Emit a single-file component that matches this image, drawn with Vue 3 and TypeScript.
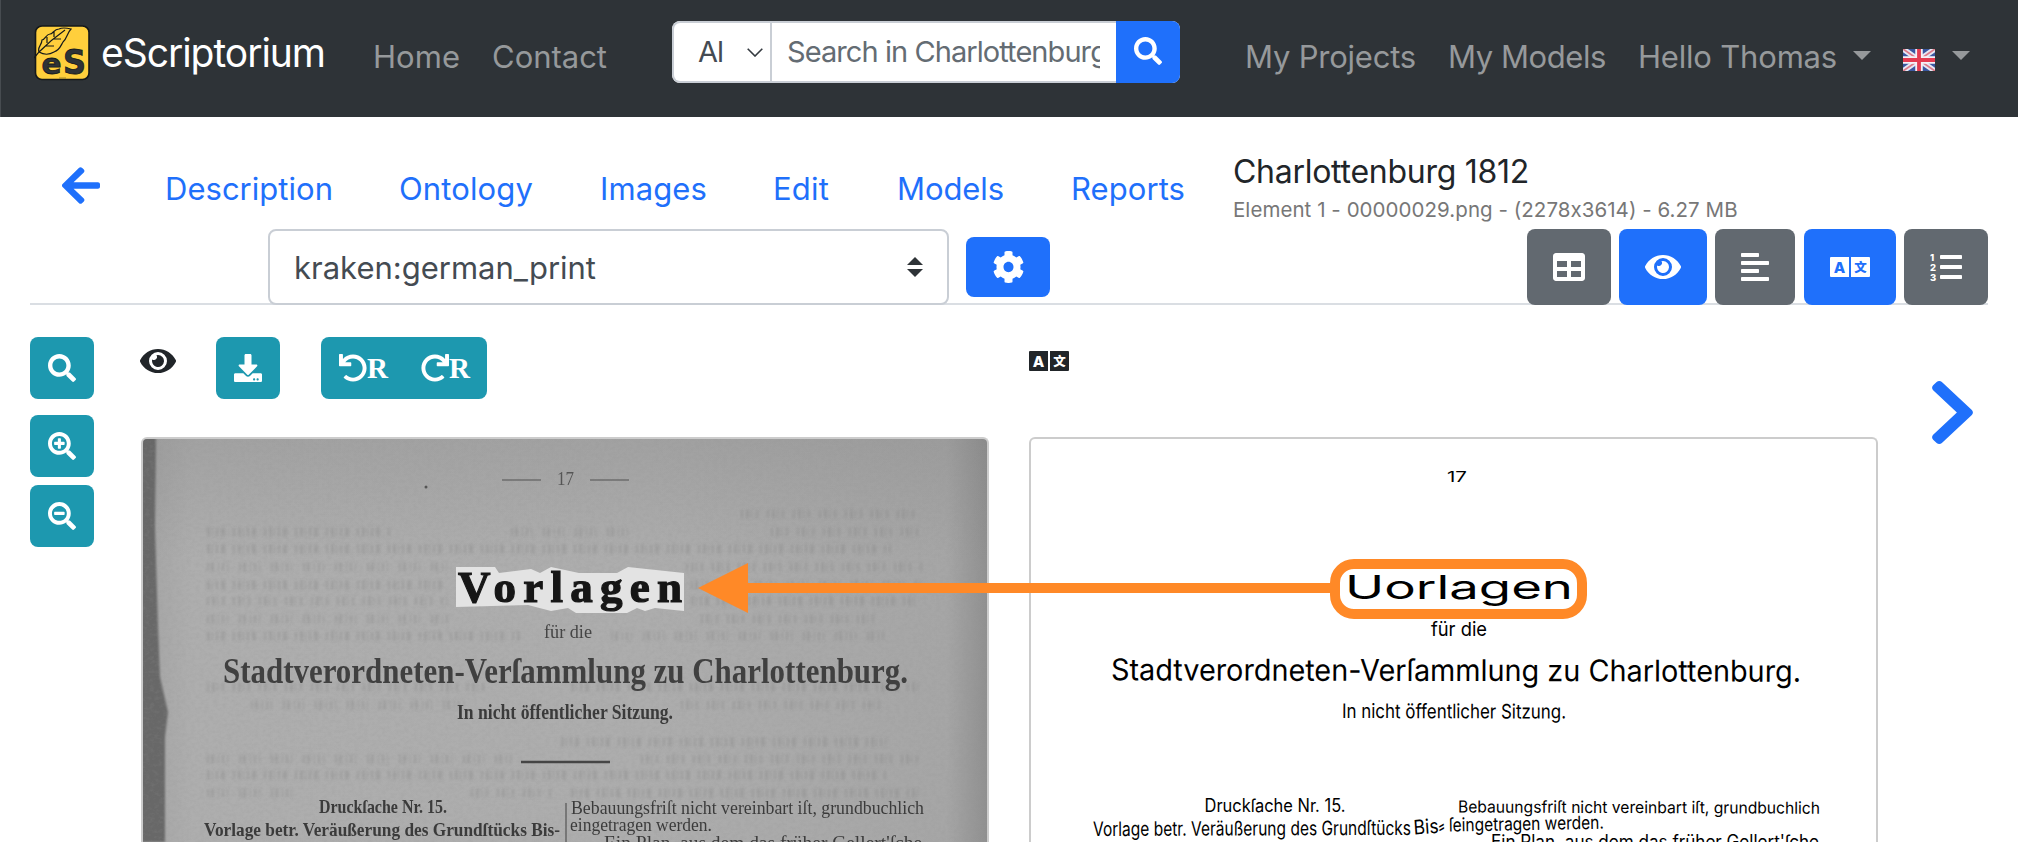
<script setup lang="ts">
import { h, type FunctionalComponent, type ObjectDirective } from 'vue'

/* Spreads a label over a fixed width by adjusting its letter spacing. */
const vFit: ObjectDirective<HTMLElement, number> = {
  mounted(el, binding) {
    const natural = el.getBoundingClientRect().width
    const count = (el.textContent ?? '').trim().length
    el.style.letterSpacing = `${(binding.value - natural) / count}px`
  },
}

const glyphs: Record<string, [string, string]> = {
  search: ['0 0 512 512', 'M505 442.7L405.3 343c-4.5-4.5-10.6-7-17-7H372c27.6-35.3 44-79.7 44-128C416 93.1 322.9 0 208 0S0 93.1 0 208s93.1 208 208 208c48.3 0 92.7-16.4 128-44v16.3c0 6.4 2.5 12.5 7 17l99.7 99.7c9.4 9.4 24.6 9.4 33.9 0l28.3-28.3c9.4-9.4 9.4-24.6.1-34zM208 336c-70.7 0-128-57.2-128-128 0-70.7 57.2-128 128-128 70.7 0 128 57.2 128 128 0 70.7-57.2 128-128 128z'],
  plus: ['0 0 512 512', 'M304 192v32c0 6.6-5.4 12-12 12h-56v56c0 6.6-5.4 12-12 12h-32c-6.6 0-12-5.4-12-12v-56h-56c-6.6 0-12-5.4-12-12v-32c0-6.6 5.4-12 12-12h56v-56c0-6.6 5.4-12 12-12h32c6.6 0 12 5.4 12 12v56h56c6.6 0 12 5.4 12 12zm201 284.7L476.7 505c-9.4 9.4-24.6 9.4-33.9 0L343 405.3c-4.5-4.5-7-10.6-7-17V372c-35.3 27.6-79.7 44-128 44C93.1 416 0 322.9 0 208S93.1 0 208 0s208 93.1 208 208c0 48.3-16.4 92.7-44 128h16.3c6.4 0 12.5 2.5 17 7l99.7 99.7c9.3 9.4 9.3 24.6 0 34zM344 208c0-75.2-60.8-136-136-136S72 132.8 72 208s60.8 136 136 136 136-60.8 136-136z'],
  minus: ['0 0 512 512', 'M304 192v32c0 6.6-5.4 12-12 12H124c-6.6 0-12-5.4-12-12v-32c0-6.6 5.4-12 12-12h168c6.6 0 12 5.4 12 12zm201 284.7L476.7 505c-9.4 9.4-24.6 9.4-33.9 0L343 405.3c-4.5-4.5-7-10.6-7-17V372c-35.3 27.6-79.7 44-128 44C93.1 416 0 322.9 0 208S93.1 0 208 0s208 93.1 208 208c0 48.3-16.4 92.7-44 128h16.3c6.4 0 12.5 2.5 17 7l99.7 99.7c9.3 9.4 9.3 24.6 0 34zM344 208c0-75.2-60.8-136-136-136S72 132.8 72 208s60.8 136 136 136 136-60.8 136-136z'],
  eye: ['0 64 576 384', 'M572.52 241.4C518.29 135.59 410.93 64 288 64S57.68 135.64 3.48 241.41a32.35 32.35 0 0 0 0 29.19C57.71 376.41 165.07 448 288 448s230.32-71.64 284.52-177.41a32.35 32.35 0 0 0 0-29.19zM288 400a144 144 0 1 1 144-144 143.93 143.93 0 0 1-144 144zm0-240a95.31 95.31 0 0 0-25.31 3.79 47.85 47.85 0 0 1-66.9 66.9A95.78 95.78 0 1 0 288 160z'],
  back: ['0 36 448 440', 'M257.5 445.1l-22.2 22.2c-9.4 9.4-24.6 9.4-33.9 0L7 273c-9.4-9.4-9.4-24.6 0-33.9L201.4 44.7c9.4-9.4 24.6-9.4 33.9 0l22.2 22.2c9.5 9.5 9.3 25-.4 34.3L136.6 216H424c13.3 0 24 10.7 24 24v32c0 13.3-10.7 24-24 24H136.6l120.5 114.8c9.8 9.3 10 24.8.4 34.3z'],
  next: ['27 37 266 438', 'M285.476 272.971L91.132 467.314c-9.373 9.373-24.569 9.373-33.941 0l-22.667-22.667c-9.357-9.357-9.375-24.522-.04-33.901L188.505 256 34.484 101.255c-9.335-9.379-9.317-24.544.04-33.901l22.667-22.667c9.373-9.373 24.569-9.373 33.941 0L285.475 239.03c9.373 9.372 9.373 24.568.001 33.941z'],
  cog: ['8 8 496 496', 'M487.4 315.7l-42.6-24.6c4.3-23.2 4.3-47 0-70.2l42.6-24.6c4.9-2.8 7.1-8.6 5.5-14-11.1-35.6-30-67.8-54.7-94.6-3.8-4.1-10-5.1-14.8-2.3L380.8 110c-17.9-15.4-38.5-27.3-60.8-35.1V25.8c0-5.6-3.9-10.5-9.4-11.7-36.7-8.2-74.3-7.8-109.2 0-5.5 1.2-9.4 6.1-9.4 11.7V75c-22.2 7.9-42.8 19.8-60.8 35.1L88.7 85.5c-4.9-2.8-11-1.9-14.8 2.3-24.7 26.7-43.6 58.9-54.7 94.6-1.7 5.4.6 11.2 5.5 14L67.3 221c-4.3 23.2-4.3 47 0 70.2l-42.6 24.6c-4.9 2.8-7.1 8.6-5.5 14 11.1 35.6 30 67.8 54.7 94.6 3.8 4.1 10 5.1 14.8 2.3l42.6-24.6c17.9 15.4 38.5 27.3 60.8 35.1v49.2c0 5.6 3.9 10.5 9.4 11.7 36.7 8.2 74.3 7.8 109.2 0 5.5-1.2 9.4-6.1 9.4-11.7v-49.2c22.2-7.9 42.8-19.8 60.8-35.1l42.6 24.6c4.9 2.8 11 1.9 14.8-2.3 24.7-26.7 43.6-58.9 54.7-94.6 1.5-5.5-.7-11.3-5.6-14.1zM256 336c-44.1 0-80-35.9-80-80s35.9-80 80-80 80 35.9 80 80-35.9 80-80 80z'],
  table: ['0 32 512 448', 'M464 32H48C21.49 32 0 53.49 0 80v352c0 26.51 21.49 48 48 48h416c26.51 0 48-21.49 48-48V80c0-26.51-21.49-48-48-48zM224 416H64v-96h160v96zm0-160H64v-96h160v96zm224 160H288v-96h160v96zm0-160H288v-96h160v96z'],
  align: ['0 32 448 448', 'M13 32h262q13 0 13 13v38q0 13-13 13H13Q0 96 0 83V45q0-13 13-13zM13 160h422q13 0 13 13v38q0 13-13 13H13q-13 0-13-13v-38q0-13 13-13zM13 288h262q13 0 13 13v38q0 13-13 13H13q-13 0-13-13v-38q0-13 13-13zM13 416h422q13 0 13 13v38q0 13-13 13H13q-13 0-13-13v-38q0-13 13-13z'],
  undo: ['0 0 512 512', 'M212.333 224.333H12c-6.627 0-12-5.373-12-12V12C0 5.373 5.373 0 12 0h48c6.627 0 12 5.373 12 12v78.112C117.773 39.279 184.26 7.47 258.175 8.007c136.906.994 246.448 111.623 246.157 248.532C504.041 393.258 393.12 504 256.333 504c-64.089 0-122.496-24.313-166.51-64.215-5.099-4.622-5.334-12.554-.467-17.42l33.967-33.967c4.474-4.474 11.662-4.717 16.401-.525C170.76 415.336 211.58 432 256.333 432c97.268 0 176-78.716 176-176 0-97.267-78.716-176-176-176-58.496 0-110.28 28.476-142.274 72.333h98.274c6.627 0 12 5.373 12 12v48c0 6.627-5.373 12-12 12z'],
  download: ['0 0 512 512', 'M216 0h80c13.3 0 24 10.7 24 24v168h87.7c17.8 0 26.7 21.5 14.1 34.1L269.7 378.3c-7.5 7.5-19.8 7.5-27.3 0L90.1 226.1c-12.6-12.6-3.7-34.1 14.1-34.1H192V24c0-13.3 10.7-24 24-24zm296 376v112c0 13.3-10.7 24-24 24H24c-13.3 0-24-10.7-24-24V376c0-13.3 10.7-24 24-24h146.7l49 49c20.1 20.1 52.5 20.1 72.6 0l49-49H488c13.3 0 24 10.7 24 24zm-124 88c0-11-9-20-20-20s-20 9-20 20 9 20 20 20 20-9 20-20zm64 0c0-11-9-20-20-20s-20 9-20 20 9 20 20 20 20-9 20-20z'],
}

const Icon: FunctionalComponent<{ name: string; w: number; h: number }> = (p) =>
  h('svg', { viewBox: glyphs[p.name][0], width: p.w, height: p.h, fill: 'currentColor', preserveAspectRatio: 'none' }, [
    h('path', { d: glyphs[p.name][1] }),
  ])
Icon.props = ['name', 'w', 'h']

const Lang: FunctionalComponent<{ knock: string }> = (p) =>
  h('svg', { viewBox: '0 0 40 20', width: 40, height: 20, fill: 'currentColor' }, [
    h('path', { d: 'M1 0H19V20H1Q0 20 0 19V1Q0 0 1 0ZM21 0H39Q40 0 40 1V19Q40 20 39 20H21Z' }),
    h('text', { x: 9.5, y: 15.5, 'text-anchor': 'middle', 'font-size': 15, 'font-weight': 800, 'font-family': 'Inter, sans-serif', fill: p.knock }, 'A'),
    h('text', { x: 30.5, y: 14.6, 'text-anchor': 'middle', 'font-size': 12.5, 'font-weight': 900, 'font-family': '"Noto Sans CJK SC", sans-serif', fill: p.knock }, '文'),
  ])
Lang.props = ['knock']

interface Tab { label: string; gap: number; width: number }
const tabs: Tab[] = [
  { label: 'Description', gap: 65, width: 168 },
  { label: 'Ontology', gap: 66, width: 134 },
  { label: 'Images', gap: 67, width: 107 },
  { label: 'Edit', gap: 66, width: 56 },
  { label: 'Models', gap: 68, width: 107 },
  { label: 'Reports', gap: 67, width: 114 },
]

interface Line { t: string; x: number; y: number; w: number; s: number; r?: number; b?: boolean; c?: string }

/* Transcription lines: x, baseline, drawn width, size and slope, in panel units. */
const transcript: Line[] = [
  { t: '17', x: 418, y: 45, w: 20, s: 14 },
  { t: 'Uorlagen', x: 316, y: 161.5, w: 228, s: 33 },
  { t: 'für die', x: 402, y: 199, w: 56, s: 19 },
  { t: 'Stadtverordneten-Verſammlung zu Charlottenburg.', x: 82, y: 243.3, w: 690, s: 30, r: 0.12 },
  { t: 'In nicht öffentlicher Sitzung.', x: 313, y: 281, w: 224, s: 20, r: 0.15 },
  { t: 'Druckſache Nr. 15.', x: 175.5, y: 375, w: 141, s: 18 },
  { t: 'Vorlage betr. Veräußerung des Grundſtücks', x: 64, y: 399, w: 318, s: 20, r: -0.2 },
  { t: 'Bis⸗', x: 385, y: 397.5, w: 31, s: 20, r: -4 },
  { t: 'ſeingetragen werden.', x: 420, y: 394.5, w: 155, s: 18.5, r: -1 },
  { t: 'Bebauungsfriſt nicht vereinbart iſt, grundbuchlich', x: 429, y: 375.5, w: 362, s: 16.5, r: 0.2 },
  { t: "Ein Plan, aus dem das früher Gellert'ſche", x: 462, y: 411, w: 328, s: 18 },
  { t: 'ſchließlich', x: 219, y: 418.5, w: 80, s: 18 },
]

const scan: Line[] = [
  { t: '17', x: 416, y: 48, w: 17, s: 19, c: '#555' },
  { t: 'für die', x: 403, y: 201, w: 48, s: 19, c: '#444' },
  { t: 'Stadtverordneten-Verſammlung zu Charlottenburg.', x: 82, y: 246, w: 685, s: 35, b: true, c: '#404040' },
  { t: 'In nicht öffentlicher Sitzung.', x: 316, y: 282, w: 216, s: 20, b: true, c: '#3b3b3b' },
  { t: 'Druckſache Nr. 15.', x: 178, y: 376, w: 128, s: 19, b: true, c: '#3b3b3b' },
  { t: 'Vorlage betr. Veräußerung des Grundſtücks Bis-', x: 63, y: 399, w: 356, s: 19, b: true, c: '#3b3b3b' },
  { t: 'Bebauungsfriſt nicht vereinbart iſt, grundbuchlich', x: 430, y: 377, w: 353, s: 19, c: '#3b3b3b' },
  { t: 'eingetragen werden.', x: 429, y: 394, w: 142, s: 19, c: '#3b3b3b' },
  { t: "Ein Plan, aus dem das früher Gellert'ſche", x: 463, y: 412, w: 318, s: 19, c: '#3b3b3b' },
]

/* Print from the reverse of the sheet: baseline, start and end of each faint row. */
const reverseRows: [number, number, number][] = [
  [77, 600, 780], [95, 66, 250], [95, 370, 490], [95, 630, 782], [112, 66, 750], [130, 66, 306], [130, 545, 782],
  [148, 66, 306], [148, 550, 780], [164, 66, 306], [164, 550, 775], [182, 66, 310], [182, 560, 740], [199, 66, 380], [199, 470, 745],
  [250, 66, 350], [250, 430, 780], [268, 110, 330], [268, 540, 740], [305, 420, 745], [322, 66, 370], [322, 500, 780],
  [338, 66, 745], [356, 66, 160], [356, 330, 410], [356, 430, 780],
]
const dashes = ['2 3 3 2 1 4 2 9', '3 2 1 3 2 3 4 8 2 3', '2 2 3 4 1 3 2 3 1 11']
</script>

<template>
  <div class="app">
    <header class="nav">
      <svg class="logo" viewBox="0 0 56 56" width="56" height="56">
        <rect x="1.5" y="1" width="53.500" height="53.500" rx="6.500" fill="#ffcf3c" stroke="#15181a" stroke-width="1.600" />
        <path d="M0 33L5 27C3 22 8 20 8 15C11 15 12 9 16 9C19 9 20 4 25 4C29 2 33 3 37 4C33 8 33 14 29 17C27 20 26 25 20 27C15 30 10 30 5 27C13 19 21 12 31 5M13 12L13 18M20 7L20 12M12 21L20 21M20 14L27 14" fill="none" stroke="#15181a" stroke-width="1.200" />
        <text x="7.500" y="49" font-size="29" textLength="20" lengthAdjust="spacingAndGlyphs">e</text>
        <text x="29" y="49" font-size="34" textLength="23" lengthAdjust="spacingAndGlyphs">S</text>
        <path d="M25 53h7" stroke="#8c7425" stroke-width=".8" />
      </svg>
      <a class="brand"><span v-fit="224">eScriptorium</span></a>
      <a class="link home"><span v-fit="87">Home</span></a>
      <a class="link contact"><span v-fit="115">Contact</span></a>
      <div class="search">
        <div class="scope"><span>Al</span>
          <svg width="16" height="9" viewBox="0 0 16 9"><path d="M.7.7 8 8 15.300.7" fill="none" stroke="#343a40" stroke-width="1.600" /></svg>
        </div>
        <div class="query"><div class="clip"><span v-fit="320">Search in Charlottenburg</span></div></div>
        <button class="go"><Icon name="search" :w="28" :h="28" /></button>
      </div>
      <a class="link projects"><span v-fit="171">My Projects</span></a>
      <a class="link models"><span v-fit="158">My Models</span></a>
      <a class="link hello"><span v-fit="199">Hello Thomas</span></a>
      <i class="caret first"></i>
      <svg class="flag" viewBox="0 0 32 22" width="32" height="22" preserveAspectRatio="none">
        <rect width="32" height="22" fill="#3957a0" />
        <path d="M0 0 32 22M32 0 0 22" stroke="#e6e8f4" stroke-width="5.500" />
        <path d="M0 0 32 22M32 0 0 22" stroke="#dd7a88" stroke-width="1.800" />
        <path d="M16 0V22M0 11H32" stroke="#f5f1f6" stroke-width="7.500" />
        <path d="M16 0V22M0 11H32" stroke="#e53b50" stroke-width="3.800" />
      </svg>
      <i class="caret"></i>
    </header>

    <section class="tabs">
      <a class="back"><Icon name="back" :w="38" :h="37" /></a>
      <a v-for="t in tabs" :key="t.label" class="tab" :style="{ marginLeft: t.gap + 'px', width: t.width + 'px' }">
        <span v-fit="t.width">{{ t.label }}</span>
      </a>
      <div class="doc">
        <div class="doc-name"><span v-fit="296">Charlottenburg 1812</span></div>
        <div class="doc-meta"><span v-fit="507">Element 1 - 00000029.png - (2278x3614) - 6.27 MB</span></div>
      </div>
    </section>

    <section class="tools">
      <div class="select">
        <span v-fit="302">kraken:german_print</span>
        <svg width="16" height="20" viewBox="0 0 16 20"><path d="M0 8 8 0 16 8ZM0 12H16L8 20Z" fill="#2e3337" /></svg>
      </div>
      <button class="btn blue gear"><Icon name="cog" :w="31" :h="32" /></button>
      <div class="toggles">
        <button class="btn grey w84"><Icon name="table" :w="32" :h="28" /></button>
        <button class="btn blue w88"><Icon name="eye" :w="36" :h="24" /></button>
        <button class="btn grey w80"><Icon name="align" :w="28" :h="28" /></button>
        <button class="btn blue w92"><Lang knock="#1f70fb" /></button>
        <button class="btn grey w84">
          <svg viewBox="0 0 32 28" width="32" height="28" fill="#fff">
            <rect x="10" y="2" width="22" height="4" rx=".8" /><rect x="10" y="12" width="22" height="4" rx=".8" /><rect x="10" y="22" width="22" height="4" rx=".8" />
            <g class="digits"><text x="0" y="7.800">1</text><text x="0" y="17.800">2</text><text x="0" y="27.800">3</text></g>
          </svg>
        </button>
      </div>
    </section>

    <main class="work">
      <aside class="zoom">
        <button class="btn teal"><Icon name="search" :w="28" :h="28" /></button>
        <button class="btn teal in"><Icon name="plus" :w="28" :h="28" /></button>
        <button class="btn teal out"><Icon name="minus" :w="28" :h="28" /></button>
      </aside>

      <section class="col left">
        <div class="bar">
          <span class="mark eye-mark"><Icon name="eye" :w="36" :h="24" /></span>
          <button class="btn teal dl"><Icon name="download" :w="28" :h="28" /></button>
          <div class="btn teal rotate">
            <span class="rot"><Icon name="undo" :w="28" :h="28" />R</span>
            <span class="rot"><Icon class="flip" name="undo" :w="28" :h="28" />R</span>
          </div>
        </div>
        <div class="panel">
          <svg width="844" height="403" viewBox="2 2 844 403">
            <defs>
              <filter id="grain" x="0" y="0" width="100%" height="100%">
                <feTurbulence type="fractalNoise" baseFrequency=".22 .3" numOctaves="3" seed="4" />
                <feColorMatrix type="matrix" values="0 0 0 0 .3  0 0 0 0 .3  0 0 0 0 .3  .9 0 0 0 -.36" />
              </filter>
              <filter id="soft"><feGaussianBlur stdDeviation=".45" /></filter>
              <filter id="faint"><feGaussianBlur stdDeviation="1.100" /></filter>
              <linearGradient id="paper" x1="0" x2="1" y1="0" y2="0">
                <stop offset="0" stop-color="#a4a4a4" /><stop offset=".06" stop-color="#aeaeae" />
                <stop offset=".6" stop-color="#adadad" /><stop offset=".95" stop-color="#a6a6a6" /><stop offset="1" stop-color="#8f8f8f" />
              </linearGradient>
              <linearGradient id="top" x1="0" x2="0" y1="0" y2="1">
                <stop offset="0" stop-color="#777" stop-opacity=".22" /><stop offset=".3" stop-color="#777" stop-opacity="0" />
              </linearGradient>
            </defs>
            <rect width="848" height="405" fill="url(#paper)" />
            <rect width="848" height="405" fill="url(#top)" />
            <path d="M0 0H15L14 90 17 190 19 240 27 275 24 300 24 405H0Z" fill="#686868" filter="url(#faint)" />
            <g filter="url(#faint)" class="reverse">
              <path v-for="(r, i) in reverseRows" :key="i" :d="`M${r[1]} ${r[0]}H${r[2]}`" :stroke-dasharray="dashes[i % 3]" />
            </g>
            <rect width="848" height="405" filter="url(#grain)" opacity=".42" />
            <g filter="url(#soft)" class="print">
              <path d="M361 43H400M449 43H488" stroke="#6c6c6c" stroke-width="1.600" />
              <circle cx="285" cy="50" r="1.500" fill="#555" />
              <path d="M380 325H469" stroke="#444" stroke-width="2.600" />
              <path d="M425 366V405" stroke="#666" stroke-width="1.500" />
              <text v-for="l in scan" :key="l.t" :x="l.x" :y="l.y" :font-size="l.s" :textLength="l.w" lengthAdjust="spacingAndGlyphs" :fill="l.c" :font-weight="l.b ? 700 : 400">{{ l.t }}</text>
            </g>
            <path d="M315 130H354L358 136 390 132 399 136 410 130 438 136H476L487 130 543 136V174L514 171 504 174 496 171 486 176H435L427 171 410 174 387 168 315 170Z" fill="#e3e3e3" />
            <text class="print head" x="317" y="165" font-size="45" textLength="224">Vorlagen</text>
          </svg>
        </div>
      </section>

      <section class="col right">
        <div class="bar"><span class="mark lang-mark"><Lang knock="#fff" /></span></div>
        <div class="panel">
          <svg width="845" height="403" viewBox="2 2 845 403">
            <text v-for="l in transcript" :key="l.t" class="trans" :x="l.x" :y="l.y" :font-size="l.s" :textLength="l.w" lengthAdjust="spacingAndGlyphs" :transform="`rotate(${l.r ?? 0} ${l.x} ${l.y})`">{{ l.t }}</text>
          </svg>
        </div>
      </section>

      <a class="next"><Icon name="next" :w="41" :h="63" /></a>
    </main>

    <svg class="callout" width="900" height="64" viewBox="0 0 900 64">
      <path d="M0 31 50 6V26H635V36H50V56Z" fill="#ff8927" />
      <rect x="637" y="7" width="247" height="50" rx="19" fill="none" stroke="#ff8927" stroke-width="10" />
    </svg>
  </div>
</template>

<style scoped>
* { box-sizing: border-box; }
.app { position: relative; width: 2018px; height: 842px; overflow: hidden; background: #fff; font-family: Inter, "Liberation Sans", sans-serif; }
svg { display: block; flex: none; }
span { display: inline-block; white-space: nowrap; }
button { border: 0; padding: 0; font: inherit; }
.nav { display: flex; align-items: flex-start; height: 117px; background: #2e3337; box-shadow: inset 1px 0 #474c50; }
.logo { margin: 25px 0 0 34px; }
.logo text { font-family: "DejaVu Sans", sans-serif; font-weight: 700; fill: #2e3337; stroke: #15181a; stroke-width: .8px; }
.brand { width: 225px; margin-left: 11px; font-size: 39px; line-height: 106px; color: #fff; }
.link { font-size: 31px; line-height: 113px; color: #96999b; flex: none; }
.home { width: 88px; margin-left: 47px; }
.contact { width: 117px; margin-left: 31px; }
.search { display: flex; width: 508px; height: 62px; margin: 21px 0 0 63px; border-radius: 8px; overflow: hidden; font-size: 29px; line-height: 60px; background: #fff; }
.scope { display: flex; align-items: center; justify-content: space-between; width: 98px; padding: 0 7px 0 24px; border: 2px solid #c9ced5; border-right: 0; border-radius: 8px 0 0 8px; color: #444b52; }
.scope span { width: 26px; letter-spacing: -1px; line-height: 60px; }
.query { width: 346px; border: 2px solid #c9ced5; border-right: 0; padding-left: 15px; color: #646c73; line-height: 58px; }
.clip { width: 313px; height: 58px; overflow: hidden; white-space: nowrap; }
.go { display: flex; justify-content: center; width: 64px; padding: 16px 0 0; background: #1f70fb; color: #fff; }
.projects { width: 171px; margin-left: 65px; }
.models { width: 159px; margin-left: 32px; }
.hello { width: 200px; margin-left: 31px; }
.caret { flex: none; width: 18px; margin: 51px 0 0 17px; border: 9px solid transparent; border-top-color: #96999b; border-bottom: 0; }
.caret.first { margin-left: 15px; }
.flag { margin: 49px 0 0 32px; }
.tabs { display: flex; height: 112px; padding-left: 62px; }
.back { width: 38px; margin-top: 50px; color: #1f70fb; }
.tab { flex: none; padding-top: 52px; font-size: 31px; line-height: 40px; color: #1f70fb; }
.doc { margin: 35px 0 0 48px; }
.doc-name { font-size: 32px; line-height: 40px; color: #212529; }
.doc-meta { margin-top: 6px; font-size: 20.5px; line-height: 24px; color: #777; }
.tools { display: flex; height: 76px; margin: 0 30px; box-shadow: inset 0 -2px #dadee3; }
.select { display: flex; align-items: center; justify-content: space-between; width: 681px; margin-left: 238px; padding: 0 24px; border: 2px solid #c9ced5; border-radius: 8px; background: #fff; font-size: 31px; color: #444b52; }
.btn { display: flex; align-items: center; justify-content: center; border-radius: 8px; color: #fff; }
.blue { background: #1f70fb; }
.grey { background: #626970; }
.teal { background: #1d98af; }
.gear { width: 84px; height: 60px; margin: 8px 0 0 17px; }
.toggles { display: flex; gap: 8px; margin-left: auto; }
.w80 { width: 80px; } .w84 { width: 84px; } .w88 { width: 88px; } .w92 { width: 92px; }
.w92 { margin-left: 1px; }
.digits { font: 800 9.5px Inter, sans-serif; }
.work { display: flex; height: 537px; padding: 32px 0 0 30px; }
.zoom { width: 64px; }
.zoom .btn { width: 64px; height: 62px; }
.in { margin-top: 16px; }
.out { margin-top: 8px; }
.left { width: 848px; margin-left: 47px; }
.right { width: 849px; margin-left: 40px; }
.bar { display: flex; align-items: flex-start; height: 100px; color: #212529; }
.eye-mark { margin: 12px 0 0 -1px; }
.lang-mark { margin-top: 14px; }
.dl { width: 64px; height: 62px; margin-left: 40px; }
.rotate { width: 166px; height: 62px; margin-left: 41px; justify-content: flex-start; padding: 0 18px; gap: 34px; }
.rot { display: flex; align-items: center; width: 48px; height: 28px; font: 700 29px/32px "Liberation Serif", serif; }
.flip { transform: scaleX(-1); }
.panel { height: 405px; border: 2px solid #ccc; border-bottom: 0; border-radius: 6px 6px 0 0; overflow: hidden; }
.print { font-family: "Liberation Serif", serif; }
.head { font-weight: 700; fill: #161616; stroke: #161616; stroke-width: 1.2px; }
.reverse path { fill: none; stroke: #777; stroke-width: 9px; opacity: .22; }
.trans { font-family: Inter, "DejaVu Sans", sans-serif; fill: #000; }
.next { margin: 44px 0 0 54px; color: #1f70fb; }
.callout { position: absolute; left: 698px; top: 557px; }
</style>

<style>
body { margin: 0; background: #fff; overflow: hidden; }
</style>
